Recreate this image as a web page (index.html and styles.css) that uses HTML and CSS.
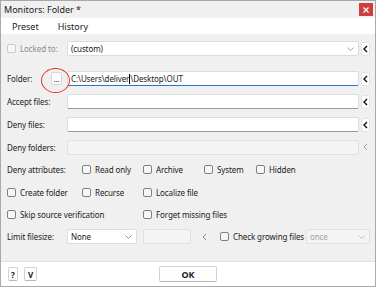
FILE: index.html
```html
<!DOCTYPE html>
<html lang="en">
<head>
  <meta charset="UTF-8">
  <meta name="viewport" content="width=device-width, initial-scale=1">
  <title>Monitors: Folder *</title>
  <link rel="stylesheet" href="styles.css">
</head>

<body>
  <div class="window">
    <div class="titlebar">
      <span class="title">Monitors: Folder *</span>
      <span class="close">
        <svg width="6" height="6" viewBox="0 0 6 6"><path d="M0.5 0.5 L5.5 5.5 M5.5 0.5 L0.5 5.5" stroke="#fff" stroke-width="1.2"/></svg>
      </span>
    </div>

    <div class="menubar">
      <span class="menu-item">Preset</span>
      <span class="menu-item">History</span>
    </div>

    <div class="content">
      <!-- locked row -->
      <div class="row row-locked">
        <div class="label">
          <span class="check disabled"><span class="box"></span>Locked to:</span>
        </div>
        <div class="combo grow">
          <span>(custom)</span>
          <svg class="chev" width="7" height="4" viewBox="0 0 7 4"><path d="M0.5 0.5 L3.5 3.5 L6.5 0.5" fill="none" stroke="#999" stroke-width="0.9"/></svg>
        </div>
        <span class="back"><svg width="5" height="8" viewBox="0 0 5 8"><path d="M4 1 L1 4 L4 7" fill="none" stroke="#111" stroke-width="1.4"/></svg></span>
      </div>

      <div class="row">
        <div class="label label-folder">Folder:<span class="dots">...</span></div>
        <div class="field focused grow">C:\Users\deliver<span class="caret"></span>\Desktop\OUT</div>
        <span class="back"><svg width="5" height="8" viewBox="0 0 5 8"><path d="M4 1 L1 4 L4 7" fill="none" stroke="#111" stroke-width="1.4"/></svg></span>
      </div>

      <div class="row">
        <div class="label">Accept files:</div>
        <div class="field grow"></div>
        <span class="back"><svg width="5" height="8" viewBox="0 0 5 8"><path d="M4 1 L1 4 L4 7" fill="none" stroke="#111" stroke-width="1.4"/></svg></span>
      </div>

      <div class="row">
        <div class="label">Deny files:</div>
        <div class="field grow"></div>
        <span class="back"><svg width="5" height="8" viewBox="0 0 5 8"><path d="M4 1 L1 4 L4 7" fill="none" stroke="#111" stroke-width="1.4"/></svg></span>
      </div>

      <div class="row tight">
        <div class="label">Deny folders:</div>
        <div class="field disabled grow"></div>
        <span class="back off"><svg width="5" height="8" viewBox="0 0 5 8"><path d="M4 1 L1 4 L4 7" fill="none" stroke="#a0a0a0" stroke-width="1"/></svg></span>
      </div>

      <!-- check grid -->
      <div class="grid-row">
        <span>Deny attributes:</span>
        <span class="check"><span class="box"></span>Read only</span>
        <span class="check"><span class="box"></span>Archive</span>
        <span class="check"><span class="box"></span>System</span>
        <span class="check"><span class="box"></span>Hidden</span>
      </div>

      <div class="grid-row tight">
        <span class="check"><span class="box"></span>Create folder</span>
        <span class="check"><span class="box"></span>Recurse</span>
        <span class="check span-2"><span class="box"></span>Localize file</span>
      </div>

      <div class="grid-row tight">
        <span class="check span-2"><span class="box"></span>Skip source verification</span>
        <span class="check span-3"><span class="box"></span>Forget missing files</span>
      </div>

      <div class="row">
        <div class="label">Limit filesize:</div>
        <div class="combo size-combo">
          <span>None</span>
          <svg class="chev" width="7" height="4" viewBox="0 0 7 4"><path d="M0.5 0.5 L3.5 3.5 L6.5 0.5" fill="none" stroke="#888" stroke-width="0.9"/></svg>
        </div>
        <div class="field disabled size-field"></div>
        <span class="back bare"><svg width="5" height="8" viewBox="0 0 5 8"><path d="M4 1 L1 4 L4 7" fill="none" stroke="#8a8a8a" stroke-width="1"/></svg></span>
        <span class="check growing"><span class="box"></span>Check growing files</span>
        <div class="combo disabled once-combo">
          <span>once</span>
          <svg class="chev" width="7" height="4" viewBox="0 0 7 4"><path d="M0.5 0.5 L3.5 3.5 L6.5 0.5" fill="none" stroke="#bbb" stroke-width="0.9"/></svg>
        </div>
      </div>
    </div>

    <div class="footer">
      <div class="footer-left">
        <span class="btn small">?</span>
        <span class="btn small wide">V</span>
      </div>
      <span class="btn ok">OK</span>
      <div></div>
    </div>

    <!-- annotation -->
    <div class="mark"></div>
  </div>
</body>
</html>
```

FILE: styles.css
```css
* {
  box-sizing: border-box;
}
body {
  margin: 0;
  background: #fff;
  font-family: "Noto Sans", "Liberation Sans", sans-serif;
  font-size: 8px;
  color: #1b1b1b;
}
.window {
  position: relative;
  width: 376px;
  height: 287px;
  border: 1px solid #a9a9a9;
  background: #f0f0f0;
  display: flex;
  flex-direction: column;
}
.titlebar {
  height: 17px;
  display: flex;
  align-items: center;
  justify-content: space-between;
  padding: 0 2px 0 3px;
  font-size: 9px;
}
.close {
  width: 14px;
  height: 13px;
  background: #cf3f3f;
  display: flex;
  align-items: center;
  justify-content: center;
}
.menubar {
  height: 16px;
  background: #fff;
  display: flex;
  align-items: center;
  padding-left: 11px;
  font-size: 9px;
}
.menu-item {
  margin-right: 19px;
}
.content {
  flex: 1;
  padding: 3px 5px 0 6px;
  letter-spacing: -0.1px;
}
.row {
  height: 23px;
  display: flex;
  align-items: center;
}
.row.tight, .grid-row.tight {
  height: 22px;
}
.row-locked {
  margin-bottom: 7px;
}
.label {
  width: 60px;
  flex-shrink: 0;
}
.label-folder {
  display: flex;
  align-items: center;
  justify-content: space-between;
  padding-right: 5px;
}
.dots {
  width: 11px;
  height: 13px;
  background: #fdfdfd;
  border: 1px solid #d6d6d6;
  border-radius: 2px;
  font-size: 7px;
  line-height: 14px;
  text-align: center;
}
.grow {
  flex: 1;
}
.field, .combo {
  height: 15px;
  background: #fff;
  border: 1px solid #dcdcdc;
  border-bottom-color: #999;
  border-radius: 2px;
  display: flex;
  align-items: center;
  padding: 0 3px;
}
.field.focused {
  border-bottom-color: #2a74c9;
}
.field.disabled, .combo.disabled {
  background: #f4f4f4;
  border-color: #e1e1e1;
  color: #a4a4a4;
}
.combo {
  justify-content: space-between;
  border-bottom-color: #dcdcdc;
}
.chev {
  margin-right: 1px;
}
.caret {
  display: inline-block;
  width: 0;
  height: 10px;
  border-left: 1px solid #000;
}
.back {
  width: 9px;
  height: 14px;
  margin-left: 2px;
  background: #fdfdfd;
  border: 1px solid #e2e2e2;
  border-radius: 2px;
  display: flex;
  align-items: center;
  justify-content: center;
}
.back.off {
  background: transparent;
  border-color: transparent;
}
.back.bare {
  background: transparent;
  border-color: transparent;
  margin-left: 9px;
}
.check {
  display: flex;
  align-items: center;
  white-space: nowrap;
}
.check .box {
  width: 9px;
  height: 9px;
  margin-right: 4px;
  border: 1px solid #808080;
  border-radius: 2px;
  background: #f7f7f7;
}
.check.disabled {
  color: #8d8d8d;
}
.check.disabled .box {
  border-color: #c9c9c9;
}
.grid-row {
  height: 23px;
  display: grid;
  grid-template-columns: 75px 61px 61px 52px 1fr;
  align-items: center;
}
.span-2 {
  grid-column: span 2;
}
.span-3 {
  grid-column: 3 / span 3;
}
.size-combo {
  width: 70px;
}
.size-field {
  width: 48px;
  margin-left: 6px;
}
.check.growing {
  margin-left: 11px;
}
.once-combo {
  width: 64px;
  margin-left: auto;
}
.footer {
  height: 25px;
  background: #fff;
  border-top: 1px solid #e2e2e2;
  display: grid;
  grid-template-columns: 1fr auto 1fr;
  align-items: center;
  padding: 0 7px;
}
.footer-left {
  display: flex;
  gap: 6px;
}
.btn {
  height: 14px;
  background: #fdfdfd;
  border: 1px solid #d2d2d2;
  border-bottom-color: #b8b8b8;
  border-radius: 2px;
  font-weight: bold;
  display: flex;
  align-items: center;
  justify-content: center;
}
.btn.small {
  width: 10px;
}
.btn.small.wide {
  width: 13px;
}
.btn.ok {
  width: 58px;
  height: 16px;
  font-size: 9px;
}
.mark {
  position: absolute;
  left: 40px;
  top: 67px;
  width: 29px;
  height: 25px;
  border: 1.5px solid #e2322c;
  border-radius: 50%;
}
```
